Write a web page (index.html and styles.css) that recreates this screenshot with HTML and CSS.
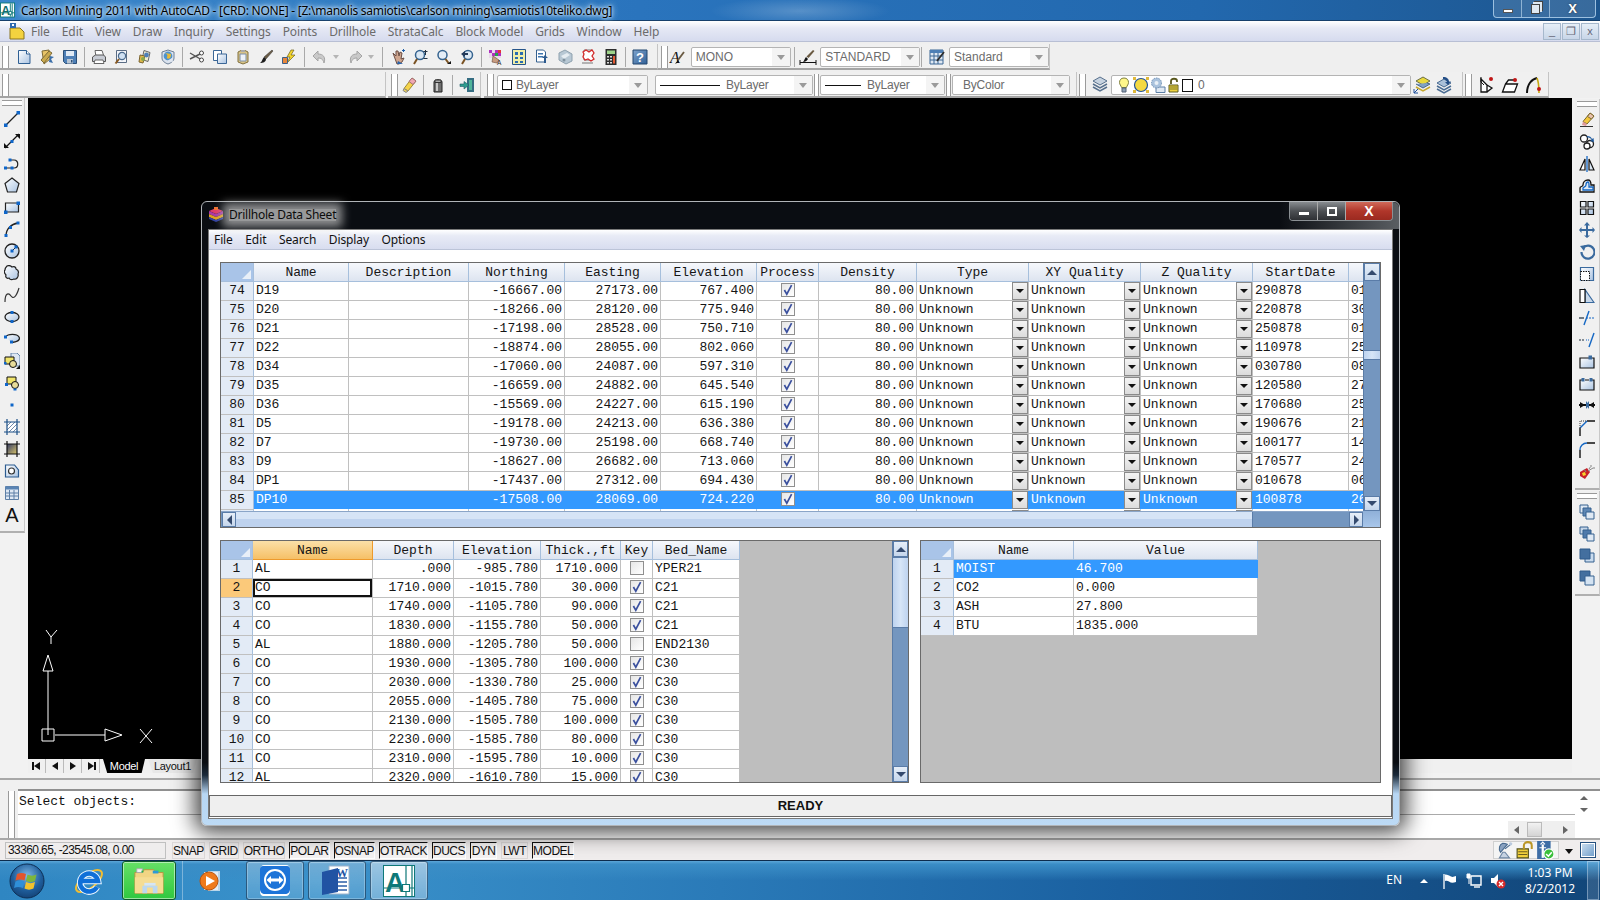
FILE: index.html
```html
<!DOCTYPE html>
<html lang="en">
<head>
<meta charset="utf-8">
<title>Carlson Mining 2011 with AutoCAD</title>
<link rel="stylesheet" href="styles.css">
</head>
<body>
<svg class="sprite" xmlns="http://www.w3.org/2000/svg">
<defs>
<linearGradient id="gb" x1="0" y1="0" x2="1" y2="1"><stop offset="0" stop-color="#fff"/><stop offset="1" stop-color="#a9c3e2"/></linearGradient>
<linearGradient id="gd" x1="0" y1="0" x2="1" y2="1"><stop offset="0" stop-color="#7fa3cc"/><stop offset="1" stop-color="#2f5f96"/></linearGradient>
<symbol id="new" viewBox="0 0 16 16"><path d="M2.5 1.5h8l3.5 3.5v9.5H2.5z" fill="url(#gb)" stroke="#2e5f93"/><path d="M10.5 1.5V5H14" fill="#fff" stroke="#2e5f93"/></symbol>
<symbol id="open" viewBox="0 0 16 16"><path d="M3 2l7-1 1 9-6 5z" fill="#e8c468" stroke="#7d6a36"/><path d="M5 14l-3-3 8-9 3 2z" fill="#c9a94e" stroke="#7d6a36"/><path d="M10 13l4 1-2-4 3-2-4-1" fill="#3a6ea8"/></symbol>
<symbol id="save" viewBox="0 0 16 16"><path d="M1.5 1.5h13v13h-11l-2-2z" fill="#4d7fb6" stroke="#2b4f78"/><path d="M4 2h8v5H4z" fill="#dfe9f4"/><path d="M5 10h6v4.5H5z" fill="#b9c6d4"/><path d="M9 11h1.5v2.5H9z" fill="#2b4f78"/></symbol>
<symbol id="print" viewBox="0 0 16 16"><path d="M4 1.5h7l2 6H5z" fill="#fff" stroke="#666"/><path d="M1.5 8l3-2h8l2 2v4.5h-13z" fill="#c8ccd4" stroke="#555"/><path d="M4 11h8l1 3.5H3z" fill="#fff" stroke="#666"/></symbol>
<symbol id="preview" viewBox="0 0 16 16"><path d="M2.5 1.5h10v12h-10z" fill="#f4f6fa" stroke="#5a6c84"/><circle cx="8" cy="7" r="3.6" fill="#cfe0f2" stroke="#4a6a8e" stroke-width="1.2"/><path d="M5 10l-3.5 4.5" stroke="#8a5a22" stroke-width="2"/></symbol>
<symbol id="publish" viewBox="0 0 16 16"><path d="M7 1.5l6 2-2 9-6-2z" fill="#f4efd0" stroke="#666"/><path d="M3 6l5 1-2 7-4-1z" fill="#e2b94b" stroke="#7a6430"/><circle cx="9.5" cy="6" r="2.4" fill="#4f80b8"/><circle cx="6" cy="10" r="2" fill="#8aa84b"/></symbol>
<symbol id="web" viewBox="0 0 16 16"><path d="M2 3l6-2 6 2v6c0 3-3 5-6 6-3-1-6-3-6-6z" fill="#dbe3ee" stroke="#6d7f96"/><circle cx="8" cy="7" r="4.4" fill="#4d93cf"/><path d="M5 4c2 1 3 2 2 4s2 2 3 1 1-3 1-4" fill="#e6b93a"/><path d="M7 12l5-3 1 4z" fill="#e0e6ef"/></symbol>
<symbol id="cut" viewBox="0 0 16 16"><path d="M1 4l12 7M1 10l12-6" stroke="#555" stroke-width="1.4"/><circle cx="12.5" cy="4" r="2" fill="#fff" stroke="#444"/><circle cx="12.5" cy="11" r="2" fill="#fff" stroke="#444"/></symbol>
<symbol id="copy" viewBox="0 0 16 16"><path d="M1.5 1.5h8v10h-8z" fill="#fff" stroke="#3b6797"/><path d="M5.5 5h9v9.5h-9z" fill="url(#gb)" stroke="#3b6797"/></symbol>
<symbol id="paste" viewBox="0 0 16 16"><path d="M3 3l3-1.5h4l3 1.5v10l-5 2-5-2z" fill="#d9c488" stroke="#80703f"/><path d="M5 5h6v7H5z" fill="#eef3f9" stroke="#7a8ea7"/><path d="M6 1h4v2H6z" fill="#aaa"/></symbol>
<symbol id="brush" viewBox="0 0 16 16"><path d="M14 1l1 1-7 8-2-2z" fill="#6b5c45" stroke="#333" stroke-width=".5"/><path d="M6 8l2 2c0 3-3 4-6 4 2-1 2-4 4-6z" fill="#1c1c1c"/></symbol>
<symbol id="flash" viewBox="0 0 16 16"><path d="M10 1l-4 7h3l-3 6 8-8h-4l3-5z" fill="#f5d62a" stroke="#6d6220" stroke-width=".7"/><path d="M1.5 8.5h5v6h-5z" fill="#e8863a" stroke="#3c5f88"/></symbol>
<symbol id="undo" viewBox="0 0 16 16"><path d="M6 2L1 7l5 5V9c3 0 5 1 6 5 2-6-1-9-6-9z" fill="#c9c9c9" stroke="#a5a5a5"/></symbol>
<symbol id="redo" viewBox="0 0 16 16"><path d="M10 2l5 5-5 5V9c-3 0-5 1-6 5-2-6 1-9 6-9z" fill="#c9c9c9" stroke="#a5a5a5"/></symbol>
<symbol id="pan" viewBox="0 0 16 16"><path d="M3 4l3 3 0-5 2 0 1 5 1-4 2 1-1 6 3-1-2 4-3 2H7z" fill="#cfa58e" stroke="#6c4e44"/><path d="M12 1.5h3M13.5 0v3" stroke="#1d5da8"/><path d="M8 12l5 3H7z" fill="#2a63a8"/></symbol>
<symbol id="zoomrt" viewBox="0 0 16 16"><circle cx="7" cy="6" r="4.5" fill="#dbe8f4" stroke="#35638f" stroke-width="1.5"/><path d="M4 10l-3 5" stroke="#7a5222" stroke-width="2"/><path d="M12.5 1v5M10.5 2.5h4M10.5 9.5h4" stroke="#234"/></symbol>
<symbol id="zoomwin" viewBox="0 0 16 16"><circle cx="6.5" cy="6" r="4.5" fill="#e4edf6" stroke="#35638f" stroke-width="1.5"/><path d="M9.5 10l3 4" stroke="#7a5222" stroke-width="2"/><path d="M11 15l4 0 0-3z" fill="#111"/></symbol>
<symbol id="zoomprev" viewBox="0 0 16 16"><circle cx="9" cy="6" r="4.5" fill="#dbe8f4" stroke="#35638f" stroke-width="1.5"/><path d="M6 10l-3 5" stroke="#7a5222" stroke-width="2"/><path d="M2 5l4-3v2h3v2H6v2z" fill="#223a5a"/></symbol>
<symbol id="prop" viewBox="0 0 16 16"><path d="M1 1h12v8H1z" fill="#e8d8ea"/><path d="M1 1h3v3H1zM7 1h3v3H7zM4 4h3v3H4zM10 4h3v3h-3z" fill="#b030c0"/><path d="M7 4h3v3H7z" fill="#25a348"/><path d="M10 1h3v3h-3z" fill="#e43535"/><path d="M5 7l6 4-2 3-5-1z" fill="#c89c80" stroke="#6a4a3a" stroke-width=".6"/><text x="9" y="16" font-size="6.5" font-family="Liberation Sans" fill="#222">A</text></symbol>
<symbol id="design" viewBox="0 0 16 16"><path d="M1.5 .5h13v15h-13z" fill="#f1efa8" stroke="#26558a"/><path d="M4 3h3v3H4zM9 3h3v3H9zM4 8h3v2H4zM9 8h3v2H9zM4 12h3v2H4zM9 12h3v2H9z" fill="#2a6cb0"/></symbol>
<symbol id="sheet" viewBox="0 0 16 16"><path d="M2.5 1h7l2 2v10h-9z" fill="#fff" stroke="#35618f"/><path d="M4 4h5v1.5H4zM4 7h5v1.5H4z" fill="#3d74ad"/><path d="M11 6l3 3-2 0v5h-2V9H8z" fill="#2c5a8e"/></symbol>
<symbol id="tool" viewBox="0 0 16 16"><path d="M2 4l6-3 7 4v7l-6 3-7-4z" fill="#b8c8d4" stroke="#8ea1ae"/><path d="M4 7l6-3 3 2-6 4z" fill="#e6edf2"/><circle cx="7" cy="11" r="1.5" fill="#7f919e"/></symbol>
<symbol id="markup" viewBox="0 0 16 16"><path d="M4 1h8v10H4z" fill="#fff" stroke="#7a7a7a"/><path d="M3 3l3-2 3 2 3-2 2 3-2 3 2 3-3 2-3-2-3 1-2-3 1-3z" fill="#fff" stroke="#d42a2a" stroke-width="1.3"/><path d="M2 14h11" stroke="#777"/></symbol>
<symbol id="calc" viewBox="0 0 16 16"><path d="M2.5 0h11v16h-11z" fill="#2d2d2d"/><path d="M4 1.5h8v3.5H4z" fill="#9ed38a"/><path d="M4 7h2v1.5H4zM7 7h2v1.5H7zM4 10h2v1.5H4zM7 10h2v1.5H7zM4 13h2v1.5H4zM7 13h2v1.5H7z" fill="#ddd"/><path d="M10 7h2v7.5h-2z" fill="#e45a33"/></symbol>
<symbol id="help" viewBox="0 0 16 16"><path d="M1 1h14v14H1z" fill="url(#gd)" stroke="#23476f"/><text x="8" y="13" text-anchor="middle" font-size="13" font-weight="700" font-family="Liberation Sans" fill="#fff">?</text></symbol>
<symbol id="tstyle" viewBox="0 0 18 18"><text x="1" y="15" font-size="16" font-family="Liberation Serif" font-style="italic" fill="#111">A</text><path d="M15 4l-6 8" stroke="#6a5a42" stroke-width="1.8"/><path d="M9 12l-3 4 4-2z" fill="#111"/></symbol>
<symbol id="dstyle" viewBox="0 0 18 18"><path d="M1 12v5M17 12v5M1 14.5h16" stroke="#111"/><path d="M14 2l1.5 1-6 7-2-1.5z" fill="#6a5a42"/><path d="M7 9l2 2c-1 2-3 3-5 3 1-1 2-4 3-5z" fill="#111"/></symbol>
<symbol id="tblstyle" viewBox="0 0 16 16"><path d="M1 1h13v14H1z" fill="#dfe8f3" stroke="#3a6795"/><path d="M1 1h13v3H1z" fill="#4d7fb6"/><path d="M1 7h13M1 11h13M5 4v11M9 4v11" stroke="#3a6795"/><path d="M15 3l-7 9" stroke="#2c2c2c" stroke-width="1.8"/></symbol>
<symbol id="eraser" viewBox="0 0 16 16"><path d="M11 1l4 3-8 10-4-2.5z" fill="#f5d34a" stroke="#9d8a33"/><path d="M11 1l4 3-3 3.5-4-3z" fill="#f0a7b2" stroke="#a37078"/><path d="M3 11.5l4 2.5-2 1.5-3-2z" fill="#e8ce5a" stroke="#888"/></symbol>
<symbol id="bottle" viewBox="0 0 16 16"><path d="M4 5c0-3 8-3 8 0v10H4z" fill="#6e6e6e" stroke="#222"/><path d="M5 3h6v2.5H5z" fill="#aaa" stroke="#333"/><path d="M6 6h2v8H6z" fill="#c7c7c7"/></symbol>
<symbol id="exit" viewBox="0 0 16 16"><path d="M8 1h7v14H8z" fill="#356d82"/><path d="M10 3h3v10h-3z" fill="#4fb49a"/><path d="M1 7h4V4.5l5 3.5-5 4V9.5H1z" fill="#2d9c8e" stroke="#1d5d66" stroke-width=".6"/></symbol>
<symbol id="layers" viewBox="0 0 18 18"><path d="M9 1l7 4-7 4-7-4z" fill="#c7d3e0" stroke="#566f8c"/><path d="M2 8l7 4 7-4M2 11l7 4 7-4" fill="none" stroke="#566f8c" stroke-width="1.5"/></symbol>
<symbol id="bulb" viewBox="0 0 16 16"><path d="M8 1c3 0 4.5 2 4.5 4.5 0 2-1.5 3-2 5h-5c-.5-2-2-3-2-5C3.5 3 5 1 8 1z" fill="#fff78a" stroke="#7f8040"/><path d="M6 11h4v4H6z" fill="#8ea0b4" stroke="#546376"/></symbol>
<symbol id="sun" viewBox="0 0 16 16"><circle cx="8" cy="8" r="6.5" fill="#f4d942" stroke="#21529a" stroke-width="1.2"/><path d="M0 0h3v3H0zM13 0h3v3h-3zM0 13h3v3H0zM13 13h3v3h-3z" fill="#e0b93b"/></symbol>
<symbol id="snow" viewBox="0 0 16 16"><path d="M6 10h9v5.5H6z" fill="#dfe8f2" stroke="#5c7fa6"/><circle cx="6.5" cy="6" r="5" fill="#a9c2dd" stroke="#6d8fb4" stroke-dasharray="1.5 1"/><circle cx="6.5" cy="6" r="2" fill="#e8eff6"/></symbol>
<symbol id="lock" viewBox="0 0 16 16"><path d="M2 8h9v7H2z" fill="#eed23d" stroke="#5a5a20"/><path d="M4 7V4c0-3 6-3 6 0v1" fill="none" stroke="#57561c" stroke-width="1.8"/><path d="M3 10h7M3 12h7" stroke="#7a7a2d"/></symbol>
<symbol id="layprev" viewBox="0 0 18 18"><path d="M10 1l7 4-7 4-7-4z" fill="#e9d93e" stroke="#6d6f46"/><path d="M3 8l7 4 7-4-3-1" fill="#7fa0c4" stroke="#49688c"/><path d="M3 11l7 4 7-4" fill="none" stroke="#c5a72d" stroke-width="1.5"/><path d="M1 17l4-4M1 13v4h4" stroke="#1d4e9c" fill="none"/></symbol>
<symbol id="laystate" viewBox="0 0 18 18"><path d="M9 3l7 4-7 4-7-4z" fill="#aac0d8" stroke="#496b92"/><path d="M2 10l7 4 7-4M2 13l7 4 7-4" fill="none" stroke="#496b92" stroke-width="1.5"/><path d="M8 1c4 0 6 2 6 5l2-1-3 4-3-3 2 0c0-1-2-3-4-3z" fill="#234e86"/></symbol>
<symbol id="ext1" viewBox="0 0 18 18"><path d="M3 3l6 6v7H3zM9 9l5 3-5 4" fill="#fff" stroke="#111" stroke-width="1.3"/><path d="M3 1v5M3 6l3 3" stroke="#111"/><circle cx="13" cy="3" r="2" fill="#c01616"/></symbol>
<symbol id="ext2" viewBox="0 0 18 18"><path d="M1.5 16l3-8h12l-3 8zM4.5 8l3-4h7" fill="#fff" stroke="#111" stroke-width="1.3"/><circle cx="14" cy="4" r="2" fill="#c01616"/></symbol>
<symbol id="ext3" viewBox="0 0 18 18"><path d="M3 17c0-9 5-14 10-15" fill="none" stroke="#111" stroke-width="2"/><path d="M13 2c2 5 2 9 2 15" fill="none" stroke="#c8a810" stroke-width="1.6"/><circle cx="15" cy="13" r="2" fill="#c01616"/></symbol>

<symbol id="d-line" viewBox="0 0 16 16"><path d="M2 14L14 2" stroke="#222" stroke-width="1.2"/><path d="M0 12.5h3.5V16H0zM12.5 0H16v3.5h-3.5z" fill="#0f66c9"/></symbol>
<symbol id="d-xline" viewBox="0 0 16 16"><path d="M1 15L15 1" stroke="#111" stroke-width="1.3"/><path d="M11 1h5v5zM5 15H0v-5z" fill="#111"/><path d="M6.5 7h3v3h-3z" fill="#0f66c9"/></symbol>
<symbol id="d-pline" viewBox="0 0 16 16"><path d="M2 13h8c5 0 5-8 0-8H6" fill="none" stroke="#222" stroke-width="1.2"/><path d="M0 11.5h3v3H0zM6.5 11.5h3v3h-3zM4.5 3.5h3v3h-3z" fill="#0f66c9"/></symbol>
<symbol id="d-poly" viewBox="0 0 16 16"><path d="M8 1l7 5.5-2.5 8.5h-9L1 6.5z" fill="url(#gb)" stroke="#222" stroke-width="1.2"/></symbol>
<symbol id="d-rect" viewBox="0 0 16 16"><path d="M1.5 4h13v9h-13z" fill="url(#gb)" stroke="#222" stroke-width="1.2"/><path d="M0 11.5h3.5V15H0zM12.5 2.5H16V6h-3.5z" fill="#0f66c9"/></symbol>
<symbol id="d-arc" viewBox="0 0 16 16"><path d="M2 15C2 8 7 3 14 2" fill="none" stroke="#222" stroke-width="1.3"/><path d="M.5 13h3v3h-3zM5 5h3v3H5zM12.5 .5h3v3h-3z" fill="#0f66c9"/></symbol>
<symbol id="d-circ" viewBox="0 0 16 16"><circle cx="8" cy="8" r="7" fill="url(#gb)" stroke="#222" stroke-width="1.3"/><path d="M8 8l4-4" stroke="#222"/><path d="M6.5 6.5h3v3h-3zM10.5 2.5h3v3h-3z" fill="#0f66c9"/></symbol>
<symbol id="d-cloud" viewBox="0 0 16 16"><path d="M3 1c2-1 4 0 5 1 2-1 4 0 4 2 2 1 3 3 2 5 1 3-2 6-4 5-2 1-4 1-5-1-2 1-4-1-3-3-2-2-2-4-1-5 0-2 1-3 2-4z" fill="url(#gb)" stroke="#222" stroke-width="1.2"/></symbol>
<symbol id="d-spline" viewBox="0 0 16 16"><path d="M1 15C1 5 5 6 7 9s5 2 8-8" fill="none" stroke="#333" stroke-width="1.2"/></symbol>
<symbol id="d-ell" viewBox="0 0 16 16"><ellipse cx="8" cy="8" rx="7" ry="4.5" fill="url(#gb)" stroke="#222" stroke-width="1.3"/><path d="M6.5 2h3v3h-3zM6.5 11h3v3h-3z" fill="#0f66c9"/></symbol>
<symbol id="d-ellarc" viewBox="0 0 16 16"><path d="M1.5 6C4 2.5 13 2.5 15 6s-4 6-8 5" fill="url(#gb)" stroke="#222" stroke-width="1.3"/><path d="M0 4.5h3v3H0zM6 9.5h3v3H6z" fill="#0f66c9"/></symbol>
<symbol id="d-insert" viewBox="0 0 16 16"><path d="M7 0h6l3 3v10H7z" fill="#dce6f1" stroke="#6283a7"/><path d="M1 4h9v7H1z" fill="#f0e46a" stroke="#111"/><circle cx="9" cy="11" r="3.5" fill="#e8dc9a" stroke="#111"/><path d="M0 9h2.5v2.5H0z" fill="#0f66c9"/><path d="M12 16l4-4v4z" fill="#111"/></symbol>
<symbol id="d-block" viewBox="0 0 16 16"><path d="M3 2h9v7H3z" fill="#f0e46a" stroke="#111"/><circle cx="11" cy="10" r="3.5" fill="#e8dc9a" stroke="#111"/><path d="M1 8h3v3H1zM9.5 13.5h3v2h-3z" fill="#0f66c9"/></symbol>
<symbol id="d-point" viewBox="0 0 16 16"><path d="M6.5 6.5h3v3h-3z" fill="#0f66c9"/></symbol>
<symbol id="d-hatch" viewBox="0 0 16 16"><path d="M3 3h10v10H3z" fill="#fff"/><path d="M3 7l4-4M3 11l8-8M5 13l8-8M9 13l4-4" stroke="#7189a8"/><path d="M0 3h16M0 13h16M3 0v16M13 0v16" stroke="#1b4f86" stroke-width="1.2"/></symbol>
<symbol id="d-grad" viewBox="0 0 16 16"><linearGradient id="gr" x1="0" y1="0" x2="1" y2="1"><stop offset="0" stop-color="#343c66"/><stop offset="1" stop-color="#d8c46a"/></linearGradient><path d="M3 3h10v10H3z" fill="url(#gr)"/><path d="M0 3h16M0 13h16M3 0v16M13 0v16" stroke="#111" stroke-width="1.2"/></symbol>
<symbol id="d-region" viewBox="0 0 16 16"><path d="M1.5 2h9l4 5v7h-13z" fill="url(#gb)" stroke="#2b5b90" stroke-width="1.2"/><circle cx="7.5" cy="8" r="3" fill="#fff" stroke="#333" stroke-width="1.2"/></symbol>
<symbol id="d-table" viewBox="0 0 16 16"><path d="M1.5 1.5h13v13h-13z" fill="#dee8f4" stroke="#5d7fa6"/><path d="M1.5 1.5h13v3h-13z" fill="#5a84b4"/><path d="M2 8h12M2 11h12M5.5 5v9M10 5v9" stroke="#5d7fa6"/></symbol>

<symbol id="m-erase" viewBox="0 0 16 16"><path d="M11 1l4 3-7 8-4-2.5z" fill="#f3c73d" stroke="#7d6a2c"/><path d="M11 1l4 3-2.5 3-4-2.5z" fill="#e9c2ae" stroke="#7d6a2c"/><path d="M1 14.5h13" stroke="#333"/><path d="M4 9.5l4 2.5-1 2-4-1z" fill="#d99"/></symbol>
<symbol id="m-copy" viewBox="0 0 16 16"><circle cx="5" cy="4.5" r="3.5" fill="#fff" stroke="#222" stroke-width="1.3"/><circle cx="11" cy="10" r="3.5" fill="#fff" stroke="#222" stroke-width="1.3"/><circle cx="8" cy="12" r="3" fill="#fff" stroke="#222" stroke-width="1.3"/><path d="M8 2c3 0 4 1 5 3l1.5-1L15 8l-4-1 1.5-1C12 4 10 3.5 8 3.5z" fill="#1f5a9e"/></symbol>
<symbol id="m-mirror" viewBox="0 0 16 16"><path d="M1 14L6 3v11z" fill="#fff" stroke="#111" stroke-width="1.2"/><path d="M15 14L10 3v11z" fill="#dbe7f3" stroke="#111" stroke-width="1.2"/><path d="M8 0v16" stroke="#1467c4" stroke-width="1.3"/></symbol>
<symbol id="m-offset" viewBox="0 0 16 16"><path d="M1 14V10c0-2 3-1 3-3 0-3 2-5 5-5s3 3 3 5h3v7z" fill="none" stroke="#111" stroke-width="1.3"/><path d="M4 12v-2c0-1 3-1 3-3s1-3 2-3 1 2 1 3v2h4v3z" fill="#dbe7f3" stroke="#1467c4" stroke-width="1.3"/></symbol>
<symbol id="m-array" viewBox="0 0 16 16"><path d="M1.5 1.5H7V7H1.5zM9 1.5h5.5V7H9zM1.5 9H7v5.5H1.5zM9 9h5.5v5.5H9z" fill="url(#gb)" stroke="#111" stroke-width="1.2"/></symbol>
<symbol id="m-move" viewBox="0 0 16 16"><path d="M8 0l3 3.5H9V7h4.5V5L16 8l-2.5 3V9H9v4.5h2L8 16l-3-2.5h2V9H2.5v2L0 8l2.5-3v2H7V3.5H5z" fill="#3a6a9e"/></symbol>
<symbol id="m-rotate" viewBox="0 0 16 16"><path d="M4 4a6.5 6.5 0 1 1-1.5 4" fill="none" stroke="#3a6a9e" stroke-width="2.2"/><path d="M1 2l6-1-2 6z" fill="#3a6a9e"/></symbol>
<symbol id="m-scale" viewBox="0 0 16 16"><path d="M1.5 1.5h13v13h-13z" fill="url(#gb)" stroke="#3a6a9e" stroke-width="1.2"/><path d="M1.5 5.5h9v9h-9z" fill="#fff" stroke="#111" stroke-dasharray="1.5 1"/></symbol>
<symbol id="m-stretch" viewBox="0 0 16 16"><path d="M6 1.5L15 14.5H6z" fill="#c9d9ea" stroke="#3a6a9e" stroke-width="1.2"/><path d="M1 1.5h5v13H1z" fill="#fff" stroke="#111" stroke-width="1.2"/></symbol>
<symbol id="m-trim" viewBox="0 0 16 16"><path d="M0 8h5" stroke="#1a2a3a" stroke-width="1.2"/><path d="M7 8h9" stroke="#1467c4" stroke-dasharray="2 1"/><path d="M5 15l5-14" stroke="#1467c4" stroke-width="1.4"/></symbol>
<symbol id="m-extend" viewBox="0 0 16 16"><path d="M0 8h6" stroke="#1a2a3a" stroke-dasharray="2 1"/><path d="M7 8h3" stroke="#1467c4" stroke-dasharray="1 1"/><path d="M10 15l5-14" stroke="#1467c4" stroke-width="1.4"/></symbol>
<symbol id="m-brk1" viewBox="0 0 16 16"><path d="M1 4h14v10H1z" fill="url(#gb)" stroke="#111" stroke-width="1.2"/><path d="M9.5 1.5H13V5.5H9.5z" fill="#3a6a9e"/></symbol>
<symbol id="m-brk2" viewBox="0 0 16 16"><path d="M3 4H1v10h14V4h-2M6 4h4" fill="url(#gb)" stroke="#111" stroke-width="1.2"/><path d="M2.5 2h3v3.5h-3zM10.5 2h3v3.5h-3z" fill="#3a6a9e"/></symbol>
<symbol id="m-join" viewBox="0 0 16 16"><path d="M0 7h16" stroke="#111" stroke-width="2"/><path d="M1 4v6l5-3zM15 4v6l-5-3z" fill="#111"/><path d="M7 3l1.5 2L10 3v8L8.5 9 7 11z" fill="#3a6a9e"/></symbol>
<symbol id="m-chamfer" viewBox="0 0 16 16"><path d="M1 16V8M8 1h8" stroke="#111" stroke-width="1.4"/><path d="M1 8l7-7" stroke="#1467c4" stroke-width="1.4"/><path d="M1 8V1h7" fill="none" stroke="#333" stroke-dasharray="1 1"/></symbol>
<symbol id="m-fillet" viewBox="0 0 16 16"><path d="M1 16V8M8 1h8" stroke="#111" stroke-width="1.4"/><path d="M1 8c0-4 3-7 7-7" fill="none" stroke="#1467c4" stroke-width="1.4"/></symbol>
<symbol id="m-expl" viewBox="0 0 16 16"><path d="M1 8l7-4 3 4-5 7-5-3z" fill="#c8202a"/><path d="M3 9l3-1 1 3-3 1z" fill="#f5d42c"/><path d="M5 5l2 3M10 5l2-3M9 7l5-3" stroke="#888"/><path d="M11 1h2v2h-2zM14 3h2v2h-2z" fill="#b9b9b9"/></symbol>
<symbol id="o-1" viewBox="0 0 16 16"><path d="M1 1h8v8H1z" fill="#dfe9f4" stroke="#35618f"/><path d="M4 4h8v8H4z" fill="#5e87b4" stroke="#35618f"/><path d="M7 8h8v7H7z" fill="#dfe9f4" stroke="#35618f"/></symbol>
<symbol id="o-2" viewBox="0 0 16 16"><path d="M1 1h8v7H1z" fill="#c6d7e9" stroke="#35618f"/><path d="M4 4h8v8H4z" fill="#4f7aab" stroke="#35618f"/><path d="M8 8h7v7H8z" fill="#dfe9f4" stroke="#35618f"/></symbol>
<symbol id="o-3" viewBox="0 0 16 16"><path d="M6 5h9v9H6z" fill="#c9dbee" stroke="#35618f"/><path d="M1 1h10v10H1z" fill="#436f9f" stroke="#2e5a8a"/></symbol>
<symbol id="o-4" viewBox="0 0 16 16"><path d="M1 1h10v10H1z" fill="#436f9f" stroke="#2e5a8a"/><path d="M6 6h9v9H6z" fill="#d4e3f2" stroke="#35618f"/></symbol>

<symbol id="app" viewBox="0 0 16 16"><path d="M0 0h16v16H0z" fill="#0f7a7a"/><path d="M1 1h14v14H1z" fill="#fff"/><text x="6" y="13" font-size="13" font-weight="700" font-family="Liberation Sans" fill="#0f6b6b" text-anchor="middle">A</text><path d="M11 1v14M1 11h14M13 1v14" stroke="#0f7a7a"/><path d="M9.5 9.5h3v3h-3z" fill="#fff" stroke="#0f7a7a"/></symbol>
<symbol id="docmenu" viewBox="0 0 18 18"><path d="M2 6h10l4 4v7H2z" fill="#f3d23f" stroke="#8a7420"/><path d="M2 1h6v5H2z" fill="#2f6bb0"/><path d="M4 2h2v2H4z" fill="#fff"/></symbol>
<symbol id="dlgicon" viewBox="0 0 16 16"><path d="M8 1l7 3-7 3-7-3z" fill="#e03a6a"/><path d="M1 4v3l7 3 7-3V4L8 7z" fill="#a93aa8"/><path d="M1 7v3l7 3 7-3V7L8 10z" fill="#e0a020"/><path d="M1 10v2l7 3 7-3v-2l-7 3z" fill="#3040a0"/><path d="M6 0h4v3H6z" fill="#f07030"/></symbol>
<symbol id="chk" viewBox="0 0 10 10"><path d="M2 5l2 3.5L8 1" fill="none" stroke="#3b509e" stroke-width="1.4"/></symbol>

<symbol id="t-orb" viewBox="0 0 36 36"><radialGradient id="orb" cx=".5" cy=".35" r=".7"><stop offset="0" stop-color="#7fb8e6"/><stop offset=".6" stop-color="#1f5e9c"/><stop offset="1" stop-color="#123e70"/></radialGradient><circle cx="18" cy="18" r="17" fill="url(#orb)" stroke="#0e2f55"/><path d="M8 11c3-1.5 6-1.5 9 0l-1.5 6.5c-3-1.5-6-1.5-9 0z" fill="#e2552c"/><path d="M18.5 11.5c3 1.5 6 1.5 9 0L26 18c-3 1.5-6 1.5-9 0z" fill="#7db63c"/><path d="M6.5 18.5c3-1.5 6-1.5 9 0L14 25c-3-1.5-6-1.5-9 0z" fill="#2f8fd8"/><path d="M17 19c3 1.5 6 1.5 9 0l-1.5 6.5c-3 1.5-6 1.5-9 0z" fill="#f3c22c"/></symbol>
<symbol id="t-ie" viewBox="0 0 32 32"><ellipse cx="16" cy="16" rx="15.5" ry="7" transform="rotate(-38 16 16)" fill="none" stroke="#f2bd30" stroke-width="2"/><path d="M24 22A9 9 0 1 1 25 16H8" fill="none" stroke="#eaf6ff" stroke-width="6.5"/><path d="M24 22A9 9 0 1 1 25 16H8" fill="none" stroke="#0f6fd8" stroke-width="4.5"/></symbol>
<symbol id="t-folder" viewBox="0 0 34 34"><path d="M2 8h8l2-3h10l2 3h8v22H2z" fill="#f1d584" stroke="#b7943f"/><path d="M4 4h6v4H4z" fill="#f4f4f4" stroke="#aaa"/><path d="M9 6h2v2H9z" fill="#24b14a"/><path d="M21 6h6v3h-6z" fill="#2d9ad6"/><path d="M2 13h30v17H2z" fill="#f5dd93"/><path d="M12 19h12v3H12z" fill="#d5e6f5"/><path d="M10 22h16v8h-5v-6h-6v6h-5z" fill="#bcd8ef"/></symbol>
<symbol id="t-wmp" viewBox="0 0 32 32"><path d="M13 6h12v20H13z" fill="#dbe8f2" opacity=".8"/><path d="M9 7h14v18H9z" fill="#e9f0f6" opacity=".9"/><circle cx="14" cy="16" r="9" fill="#ee7a1c" stroke="#b9530d"/><path d="M11 11l9 5-9 5z" fill="#fff"/></symbol>
<symbol id="t-tv" viewBox="0 0 32 32"><path d="M5 0h22c3 0 4 2 4 4v22c0 3-2 5-4 5H5c-3 0-4-2-4-5V4c0-2 2-4 4-4z" fill="#fff"/><path d="M4 1h24c2 0 3 1 3 3v20c0 3-2 5-5 5H6c-3 0-5-2-5-5V4c0-2 1-3 3-3z" fill="#1d74d8"/><circle cx="16" cy="15" r="11" fill="#fff"/><circle cx="16" cy="15" r="9" fill="#1d74d8"/><path d="M7.5 15l4.5-4v2.5h8V11l4.500 4-4.500 4v-2.500h-8V19z" fill="#fff"/></symbol>
<symbol id="t-word" viewBox="0 0 32 32"><path d="M8 1h20v28H8z" fill="#fff" stroke="#9cb2cb"/><path d="M14 13h12M14 17h12M14 21h12M14 25h12" stroke="#2d5fa8" stroke-width="1.4"/><path d="M1 7l16-4v24L1 30z" fill="#2153a3"/><text x="21" y="12" font-size="12" font-weight="700" font-family="Liberation Serif" fill="#2153a3" text-anchor="middle">W</text></symbol>
<symbol id="t-acad" viewBox="0 0 32 32"><path d="M0 0h32v32H0z" fill="#fff"/><text x="12" y="27" font-size="28" font-weight="700" font-family="Liberation Sans" fill="#0e7878" text-anchor="middle">A</text><path d="M23 0v32M0 23h32M29 0v32" stroke="#0e7878" stroke-width="1.2"/><path d="M19.5 19.5h7v7h-7z" fill="#fff" stroke="#0e7878" stroke-width="1.2"/><path d="M0 0h32v32H0z" fill="none" stroke="#0e7878" stroke-width="2"/></symbol>
<symbol id="s-sat" viewBox="0 0 16 16"><path d="M6 2c-3 1-4 5-2 8l6-7C8 2 7 2 6 2z" fill="#8aa2c0" stroke="#4a6b90"/><path d="M8 7l5-4" stroke="#4a6b90"/><circle cx="13" cy="2.5" r="1.5" fill="#b9c9de"/><path d="M6 10l-3 5h9l-4-5z" fill="#c5d2e2" stroke="#6e86a4"/></symbol>
<symbol id="s-lock" viewBox="0 0 16 16"><path d="M1 7h10v8H1z" fill="#f0cf3b" stroke="#53501a"/><path d="M7 7V4c0-4 7-4 7 0v3" fill="none" stroke="#bb9626" stroke-width="1.8"/><path d="M2 9.5h8M2 12h8" stroke="#6b5e1f"/></symbol>
<symbol id="s-tool" viewBox="0 0 16 16"><path d="M1 0h12v16H1z" fill="#3d6da5"/><path d="M5 3h2v12H5z" fill="#fff"/><path d="M3 6h6M4 3l2-2 2 2" stroke="#fff" fill="none"/><circle cx="11.5" cy="11.5" r="4.5" fill="#3abf3a" stroke="#fff"/><path d="M9 11.5l2 2 3-3.500" stroke="#fff" fill="none" stroke-width="1.4"/></symbol>
<symbol id="y-flag" viewBox="0 0 16 16"><path d="M2 1v15" stroke="#fff" stroke-width="1.3"/><path d="M3 1.5c3 0 4 1 6 2s3 0 5-.5v6c-3 1-5 1-7-.5-1-.5-2-1-4-.5z" fill="#fff"/></symbol>
<symbol id="y-net" viewBox="0 0 16 16"><path d="M5 3h10v9H5z" fill="none" stroke="#fff" stroke-width="1.4"/><path d="M1 1h3v4H1zM3 5v6" stroke="#fff" fill="#fff"/><path d="M8 14h6" stroke="#fff" stroke-width="1.4"/></symbol>
<symbol id="y-spk" viewBox="0 0 16 16"><path d="M1 5h3l4-4v13L4 10H1z" fill="#fff"/><circle cx="11" cy="11" r="4.5" fill="#d52a2a"/><path d="M9 9l4 4M13 9l-4 4" stroke="#fff" stroke-width="1.4"/></symbol>
</defs>
</svg>

<div class="app">
  <header class="titlebar">
    <svg class="i app-ico"><use href="#app"/></svg>
    <span class="title-text">Carlson Mining 2011 with AutoCAD - [CRD: NONE] - [Z:\manolis samiotis\carlson mining\samiotis10teliko.dwg]</span>
    <div class="wbtns">
      <span class="wb wb-min"><i></i></span><span class="wb wb-max"><i></i></span><span class="wb wb-close">X</span>
    </div>
  </header>

  <nav class="menubar">
    <svg class="menu-ico"><use href="#docmenu"/></svg>
    <span>File</span><span>Edit</span><span>View</span><span>Draw</span><span>Inquiry</span><span>Settings</span><span>Points</span><span>Drillhole</span><span>StrataCalc</span><span>Block Model</span><span>Grids</span><span>Window</span><span>Help</span>
    <div class="childbtns"><span class="cb">_</span><span class="cb">&#10064;</span><span class="cb">x</span></div>
  </nav>

  <div class="tbrow">
    <div class="tb tb1">
      <i class="handle"></i>
      <b><svg class="i"><use href="#new"/></svg></b><b><svg class="i"><use href="#open"/></svg></b><b><svg class="i"><use href="#save"/></svg></b><i class="sep"></i>
      <b><svg class="i"><use href="#print"/></svg></b><b><svg class="i"><use href="#preview"/></svg></b><b><svg class="i"><use href="#publish"/></svg></b><b><svg class="i"><use href="#web"/></svg></b><i class="sep"></i>
      <b><svg class="i"><use href="#cut"/></svg></b><b><svg class="i"><use href="#copy"/></svg></b><b><svg class="i"><use href="#paste"/></svg></b><b><svg class="i"><use href="#brush"/></svg></b><b><svg class="i"><use href="#flash"/></svg></b><i class="sep sep-w"></i>
      <b><svg class="i"><use href="#undo"/></svg></b><i class="drop"></i><b><svg class="i"><use href="#redo"/></svg></b><i class="drop"></i><i class="sep sep-w"></i>
      <b><svg class="i"><use href="#pan"/></svg></b><b><svg class="i"><use href="#zoomrt"/></svg></b><b><svg class="i"><use href="#zoomwin"/></svg></b><b><svg class="i"><use href="#zoomprev"/></svg></b><i class="sep"></i>
      <b><svg class="i"><use href="#prop"/></svg></b><b><svg class="i"><use href="#design"/></svg></b><b><svg class="i"><use href="#sheet"/></svg></b><b><svg class="i"><use href="#tool"/></svg></b><b><svg class="i"><use href="#markup"/></svg></b><b><svg class="i"><use href="#calc"/></svg></b><i class="sep"></i>
      <b><svg class="i"><use href="#help"/></svg></b>
    </div>
    <div class="tb tb2">
      <i class="handle"></i>
      <b><svg class="i i18"><use href="#tstyle"/></svg></b>
      <span class="combo c-mono">MONO<i class="arrow"></i></span>
      <i class="sep sep-a"></i>
      <b><svg class="i i18"><use href="#dstyle"/></svg></b>
      <span class="combo c-mono">STANDARD<i class="arrow"></i></span>
      <i class="sep sep-b"></i>
      <b><svg class="i"><use href="#tblstyle"/></svg></b>
      <span class="combo c-mono">Standard<i class="arrow"></i></span>
    </div>
  </div>

  <div class="tbrow">
    <div class="tb tb-empty"><i class="handle"></i></div>
    <div class="tb tb3">
      <i class="handle"></i>
      <b><svg class="i"><use href="#eraser"/></svg></b><i class="sep"></i>
      <b><svg class="i"><use href="#bottle"/></svg></b><i class="sep"></i>
      <b><svg class="i"><use href="#exit"/></svg></b>
    </div>
    <div class="tb tb4">
      <i class="handle"></i>
      <span class="combo c-color"><i class="swatch"></i>ByLayer<i class="arrow"></i></span>
      <span class="combo c-line"><i class="ln"></i>ByLayer<i class="arrow"></i></span>
      <i class="handle handle-s"></i>
      <span class="combo c-line2"><i class="ln"></i>ByLayer<i class="arrow"></i></span>
      <i class="handle handle-s"></i>
      <span class="combo c-plot">ByColor<i class="arrow"></i></span>
    </div>
    <div class="tb tb5">
      <i class="handle"></i>
      <b><svg class="i i18"><use href="#layers"/></svg></b>
      <span class="combo c-layer">
        <svg class="i i14"><use href="#bulb"/></svg><svg class="i i14"><use href="#sun"/></svg><svg class="i i14"><use href="#snow"/></svg><svg class="i i14"><use href="#lock"/></svg><i class="swatch sw-lg"></i>0<i class="arrow"></i>
      </span>
      <b><svg class="i i18"><use href="#layprev"/></svg></b><b><svg class="i i18"><use href="#laystate"/></svg></b>
    </div>
    <div class="tb tb6">
      <i class="handle"></i>
      <b><svg class="i i18"><use href="#ext1"/></svg></b><b><svg class="i i18"><use href="#ext2"/></svg></b><b><svg class="i i18"><use href="#ext3"/></svg></b>
    </div>
  </div>

  <main class="workspace">
    <aside class="vbar vbar-l">
      <div class="vtb">
        <i class="vhandle"></i>
        <b><svg class="i"><use href="#d-line"/></svg></b><b><svg class="i"><use href="#d-xline"/></svg></b><b><svg class="i"><use href="#d-pline"/></svg></b><b><svg class="i"><use href="#d-poly"/></svg></b><b><svg class="i"><use href="#d-rect"/></svg></b><b><svg class="i"><use href="#d-arc"/></svg></b><b><svg class="i"><use href="#d-circ"/></svg></b><b><svg class="i"><use href="#d-cloud"/></svg></b><b><svg class="i"><use href="#d-spline"/></svg></b><b><svg class="i"><use href="#d-ell"/></svg></b><b><svg class="i"><use href="#d-ellarc"/></svg></b><b><svg class="i"><use href="#d-insert"/></svg></b><b><svg class="i"><use href="#d-block"/></svg></b><b><svg class="i"><use href="#d-point"/></svg></b><b><svg class="i"><use href="#d-hatch"/></svg></b><b><svg class="i"><use href="#d-grad"/></svg></b><b><svg class="i"><use href="#d-region"/></svg></b><b><svg class="i"><use href="#d-table"/></svg></b><b class="big-a">A</b>
      </div>
    </aside>
    <section class="canvas-col">
      <div class="canvas">
        <svg class="ucs" viewBox="0 0 130 130" width="130" height="130">
          <g fill="none" stroke="#fff" stroke-width="1">
            <path d="M20 114V50"/><path d="M15 50l5-16 5 16z"/><path d="M27 114h50"/><path d="M77 108l17 6-17 6z"/><path d="M14 108h12v12H14z"/>
            <path d="M18 9l5 7 6-7M23 16v7M112 108l12 14M124 108l-12 14"/>
          </g>
        </svg>
      </div>
      <div class="tabs">
        <span class="nav"><i class="nf"></i></span><span class="nav"><i class="np"></i></span><span class="nav"><i class="nn"></i></span><span class="nav"><i class="nl"></i></span>
        <span class="tab tab-on">Model</span><span class="tab">Layout1</span>
      </div>
    </section>
    <aside class="vbar vbar-r">
      <div class="vtb">
        <i class="vhandle"></i>
        <b><svg class="i"><use href="#m-erase"/></svg></b><b><svg class="i"><use href="#m-copy"/></svg></b><b><svg class="i"><use href="#m-mirror"/></svg></b><b><svg class="i"><use href="#m-offset"/></svg></b><b><svg class="i"><use href="#m-array"/></svg></b><b><svg class="i"><use href="#m-move"/></svg></b><b><svg class="i"><use href="#m-rotate"/></svg></b><b><svg class="i"><use href="#m-scale"/></svg></b><b><svg class="i"><use href="#m-stretch"/></svg></b><b><svg class="i"><use href="#m-trim"/></svg></b><b><svg class="i"><use href="#m-extend"/></svg></b><b><svg class="i"><use href="#m-brk1"/></svg></b><b><svg class="i"><use href="#m-brk2"/></svg></b><b><svg class="i"><use href="#m-join"/></svg></b><b><svg class="i"><use href="#m-chamfer"/></svg></b><b><svg class="i"><use href="#m-fillet"/></svg></b><b><svg class="i"><use href="#m-expl"/></svg></b>
      </div>
      <div class="vtb">
        <i class="vhandle"></i>
        <b><svg class="i"><use href="#o-1"/></svg></b><b><svg class="i"><use href="#o-2"/></svg></b><b><svg class="i"><use href="#o-3"/></svg></b><b><svg class="i"><use href="#o-4"/></svg></b>
      </div>
    </aside>
  </main>

  <section class="command">
    <i class="chandle"></i>
    <div class="cbox">
      <div class="cline">Select objects:</div>
      <div class="cinput"></div>
    </div>
    <div class="cscroll">
      <span class="ca ca-up"></span><span class="ca ca-dn"></span>
      <div class="chs"><i class="al"></i><i class="thumb"></i><i class="ar"></i></div>
    </div>
  </section>

  <footer class="status">
    <span class="coords">33360.65, -23545.08, 0.00</span>
    <span class="st">SNAP</span><span class="st">GRID</span><span class="st">ORTHO</span><span class="st on">POLAR</span><span class="st on">OSNAP</span><span class="st on">OTRACK</span><span class="st on">DUCS</span><span class="st on">DYN</span><span class="st">LWT</span><span class="st on">MODEL</span>
    <div class="strayr">
      <div class="stray"><svg class="i i18"><use href="#s-sat"/></svg><svg class="i i18"><use href="#s-lock"/></svg><svg class="i i18"><use href="#s-tool"/></svg></div>
      <i class="sdrop"></i>
      <i class="sclean"></i>
    </div>
  </footer>

  <div class="taskbar">
    <svg class="orb"><use href="#t-orb"/></svg>
    <span class="tk tk-pin"><svg class="tk-i"><use href="#t-ie"/></svg></span>
    <span class="tk tk-on"><svg class="tk-i"><use href="#t-folder"/></svg></span>
    <span class="tk tk-wmp"><svg class="tk-i"><use href="#t-wmp"/></svg></span>
    <span class="tk tk-run"><svg class="tk-i"><use href="#t-tv"/></svg></span>
    <span class="tk tk-run"><svg class="tk-i"><use href="#t-word"/></svg></span>
    <span class="tk tk-run tk-act"><svg class="tk-i"><use href="#t-acad"/></svg></span>
    <div class="tray">
      <span class="lang">EN</span>
      <i class="tup"></i>
      <svg class="i"><use href="#y-flag"/></svg><svg class="i"><use href="#y-net"/></svg><svg class="i"><use href="#y-spk"/></svg>
      <div class="clock"><span>1:03 PM</span><span>8/2/2012</span></div>
      <i class="showdesk"></i>
    </div>
  </div>

  <div class="dialog">
    <div class="dlg-title">
      <svg class="i"><use href="#dlgicon"/></svg>
      <span class="dlg-name">Drillhole Data Sheet</span>
      <div class="dlg-btns"><span class="db"><i class="db-min"></i></span><span class="db"><i class="db-max"></i></span><span class="db db-x">X</span></div>
    </div>
    <div class="dlg-client">
      <nav class="dlg-menu"><span>File</span><span>Edit</span><span>Search</span><span>Display</span><span>Options</span></nav>
      <div class="dlg-body">
        <div class="panel p-top">
          <div class="view">
            <table class="sheet t-main">
              <thead><tr><th class="corner"></th><th>Name</th><th>Description</th><th>Northing</th><th>Easting</th><th>Elevation</th><th>Process</th><th>Density</th><th>Type</th><th>XY Quality</th><th>Z Quality</th><th>StartDate</th><th></th></tr></thead>
              <tbody>
<tr><td class="rh">74</td><td>D19</td><td></td><td class="n">-16667.00</td><td class="n">27173.00</td><td class="n">767.400</td><td class="c"><i class="cb1 on"><svg><use href="#chk"/></svg></i></td><td class="n">80.00</td><td><i class="ddb"></i>Unknown</td><td><i class="ddb"></i>Unknown</td><td><i class="ddb"></i>Unknown</td><td>290878</td><td>01</td></tr>
<tr><td class="rh">75</td><td>D20</td><td></td><td class="n">-18266.00</td><td class="n">28120.00</td><td class="n">775.940</td><td class="c"><i class="cb1 on"><svg><use href="#chk"/></svg></i></td><td class="n">80.00</td><td><i class="ddb"></i>Unknown</td><td><i class="ddb"></i>Unknown</td><td><i class="ddb"></i>Unknown</td><td>220878</td><td>30</td></tr>
<tr><td class="rh">76</td><td>D21</td><td></td><td class="n">-17198.00</td><td class="n">28528.00</td><td class="n">750.710</td><td class="c"><i class="cb1 on"><svg><use href="#chk"/></svg></i></td><td class="n">80.00</td><td><i class="ddb"></i>Unknown</td><td><i class="ddb"></i>Unknown</td><td><i class="ddb"></i>Unknown</td><td>250878</td><td>01</td></tr>
<tr><td class="rh">77</td><td>D22</td><td></td><td class="n">-18874.00</td><td class="n">28055.00</td><td class="n">802.060</td><td class="c"><i class="cb1 on"><svg><use href="#chk"/></svg></i></td><td class="n">80.00</td><td><i class="ddb"></i>Unknown</td><td><i class="ddb"></i>Unknown</td><td><i class="ddb"></i>Unknown</td><td>110978</td><td>25</td></tr>
<tr><td class="rh">78</td><td>D34</td><td></td><td class="n">-17060.00</td><td class="n">24087.00</td><td class="n">597.310</td><td class="c"><i class="cb1 on"><svg><use href="#chk"/></svg></i></td><td class="n">80.00</td><td><i class="ddb"></i>Unknown</td><td><i class="ddb"></i>Unknown</td><td><i class="ddb"></i>Unknown</td><td>030780</td><td>08</td></tr>
<tr><td class="rh">79</td><td>D35</td><td></td><td class="n">-16659.00</td><td class="n">24882.00</td><td class="n">645.540</td><td class="c"><i class="cb1 on"><svg><use href="#chk"/></svg></i></td><td class="n">80.00</td><td><i class="ddb"></i>Unknown</td><td><i class="ddb"></i>Unknown</td><td><i class="ddb"></i>Unknown</td><td>120580</td><td>27</td></tr>
<tr><td class="rh">80</td><td>D36</td><td></td><td class="n">-15569.00</td><td class="n">24227.00</td><td class="n">615.190</td><td class="c"><i class="cb1 on"><svg><use href="#chk"/></svg></i></td><td class="n">80.00</td><td><i class="ddb"></i>Unknown</td><td><i class="ddb"></i>Unknown</td><td><i class="ddb"></i>Unknown</td><td>170680</td><td>25</td></tr>
<tr><td class="rh">81</td><td>D5</td><td></td><td class="n">-19178.00</td><td class="n">24213.00</td><td class="n">636.380</td><td class="c"><i class="cb1 on"><svg><use href="#chk"/></svg></i></td><td class="n">80.00</td><td><i class="ddb"></i>Unknown</td><td><i class="ddb"></i>Unknown</td><td><i class="ddb"></i>Unknown</td><td>190676</td><td>21</td></tr>
<tr><td class="rh">82</td><td>D7</td><td></td><td class="n">-19730.00</td><td class="n">25198.00</td><td class="n">668.740</td><td class="c"><i class="cb1 on"><svg><use href="#chk"/></svg></i></td><td class="n">80.00</td><td><i class="ddb"></i>Unknown</td><td><i class="ddb"></i>Unknown</td><td><i class="ddb"></i>Unknown</td><td>100177</td><td>14</td></tr>
<tr><td class="rh">83</td><td>D9</td><td></td><td class="n">-18627.00</td><td class="n">26682.00</td><td class="n">713.060</td><td class="c"><i class="cb1 on"><svg><use href="#chk"/></svg></i></td><td class="n">80.00</td><td><i class="ddb"></i>Unknown</td><td><i class="ddb"></i>Unknown</td><td><i class="ddb"></i>Unknown</td><td>170577</td><td>24</td></tr>
<tr><td class="rh">84</td><td>DP1</td><td></td><td class="n">-17437.00</td><td class="n">27312.00</td><td class="n">694.430</td><td class="c"><i class="cb1 on"><svg><use href="#chk"/></svg></i></td><td class="n">80.00</td><td><i class="ddb"></i>Unknown</td><td><i class="ddb"></i>Unknown</td><td><i class="ddb"></i>Unknown</td><td>010678</td><td>06</td></tr>
<tr class="sel"><td class="rh">85</td><td>DP10</td><td></td><td class="n">-17508.00</td><td class="n">28069.00</td><td class="n">724.220</td><td class="c"><i class="cb1 on"><svg><use href="#chk"/></svg></i></td><td class="n">80.00</td><td><i class="ddb"></i>Unknown</td><td><i class="ddb"></i>Unknown</td><td><i class="ddb"></i>Unknown</td><td>100878</td><td>26</td></tr>
<tr><td class="rh"></td><td></td><td></td><td></td><td></td><td></td><td></td><td></td><td><i class="ddb"></i></td><td><i class="ddb"></i></td><td><i class="ddb"></i></td><td></td><td></td></tr>
              </tbody>
            </table>
          </div>
          <div class="vs">
            <span class="sb-btn b-top"><i class="tri up"></i></span><i class="track t-a"></i><i class="vthumb vt-a"></i><i class="track"></i><span class="sb-btn b-bot"><i class="tri dn"></i></span>
          </div>
          <div class="hs">
            <span class="sb-btn b-side"><i class="tri lf"></i></span><i class="hthumb"></i><i class="htrack"></i><span class="sb-btn b-side"><i class="tri rt"></i></span>
          </div>
          <i class="scorner"></i>
        </div>

        <div class="lower">
          <div class="panel p-layers">
            <div class="view grey">
              <table class="sheet t-lay">
                <thead><tr><th class="corner"></th><th class="hot">Name</th><th>Depth</th><th>Elevation</th><th>Thick.,ft</th><th>Key</th><th>Bed_Name</th></tr></thead>
                <tbody>
<tr><td class="rh">1</td><td>AL</td><td class="n">.000</td><td class="n">-985.780</td><td class="n">1710.000</td><td class="c"><i class="cb1"></i></td><td>YPER21</td></tr>
<tr><td class="rh hot">2</td><td class="cur">CO</td><td class="n">1710.000</td><td class="n">-1015.780</td><td class="n">30.000</td><td class="c"><i class="cb1 on"><svg><use href="#chk"/></svg></i></td><td>C21</td></tr>
<tr><td class="rh">3</td><td>CO</td><td class="n">1740.000</td><td class="n">-1105.780</td><td class="n">90.000</td><td class="c"><i class="cb1 on"><svg><use href="#chk"/></svg></i></td><td>C21</td></tr>
<tr><td class="rh">4</td><td>CO</td><td class="n">1830.000</td><td class="n">-1155.780</td><td class="n">50.000</td><td class="c"><i class="cb1 on"><svg><use href="#chk"/></svg></i></td><td>C21</td></tr>
<tr><td class="rh">5</td><td>AL</td><td class="n">1880.000</td><td class="n">-1205.780</td><td class="n">50.000</td><td class="c"><i class="cb1"></i></td><td>END2130</td></tr>
<tr><td class="rh">6</td><td>CO</td><td class="n">1930.000</td><td class="n">-1305.780</td><td class="n">100.000</td><td class="c"><i class="cb1 on"><svg><use href="#chk"/></svg></i></td><td>C30</td></tr>
<tr><td class="rh">7</td><td>CO</td><td class="n">2030.000</td><td class="n">-1330.780</td><td class="n">25.000</td><td class="c"><i class="cb1 on"><svg><use href="#chk"/></svg></i></td><td>C30</td></tr>
<tr><td class="rh">8</td><td>CO</td><td class="n">2055.000</td><td class="n">-1405.780</td><td class="n">75.000</td><td class="c"><i class="cb1 on"><svg><use href="#chk"/></svg></i></td><td>C30</td></tr>
<tr><td class="rh">9</td><td>CO</td><td class="n">2130.000</td><td class="n">-1505.780</td><td class="n">100.000</td><td class="c"><i class="cb1 on"><svg><use href="#chk"/></svg></i></td><td>C30</td></tr>
<tr><td class="rh">10</td><td>CO</td><td class="n">2230.000</td><td class="n">-1585.780</td><td class="n">80.000</td><td class="c"><i class="cb1 on"><svg><use href="#chk"/></svg></i></td><td>C30</td></tr>
<tr><td class="rh">11</td><td>CO</td><td class="n">2310.000</td><td class="n">-1595.780</td><td class="n">10.000</td><td class="c"><i class="cb1 on"><svg><use href="#chk"/></svg></i></td><td>C30</td></tr>
<tr><td class="rh">12</td><td>AL</td><td class="n">2320.000</td><td class="n">-1610.780</td><td class="n">15.000</td><td class="c"><i class="cb1 on"><svg><use href="#chk"/></svg></i></td><td>C30</td></tr>
                </tbody>
              </table>
            </div>
            <div class="vs">
              <span class="sb-btn b-top2"><i class="tri up"></i></span><i class="vthumb vt-b"></i><i class="track"></i><span class="sb-btn b-top2"><i class="tri dn"></i></span>
            </div>
          </div>
          <div class="panel p-qual">
            <div class="view grey">
              <table class="sheet t-qual">
                <thead><tr><th class="corner"></th><th>Name</th><th>Value</th></tr></thead>
                <tbody>
<tr class="sel"><td class="rh">1</td><td>MOIST</td><td>46.700</td></tr>
<tr><td class="rh">2</td><td>CO2</td><td>0.000</td></tr>
<tr><td class="rh">3</td><td>ASH</td><td>27.800</td></tr>
<tr><td class="rh">4</td><td>BTU</td><td>1835.000</td></tr>
                </tbody>
              </table>
            </div>
          </div>
        </div>
        <div class="dlg-status">READY</div>
      </div>
    </div>
  </div>
</div>
</body>
</html>
```
FILE: styles.css
```css
* { box-sizing: border-box; }
html, body { margin: 0; padding: 0; }
body { width: 1600px; height: 900px; overflow: hidden; background: #f0f0f0; font-family: "Noto Sans", "Liberation Sans", sans-serif; }
.sprite { width: 0; height: 0; position: absolute; }
i, b { font-style: normal; font-weight: normal; display: block; }
.i { width: 16px; height: 16px; display: block; flex: none; }
.i18 { width: 18px; height: 18px; }
.i14 { width: 17px; height: 16px; padding-right: 1px; }
.app { position: relative; width: 1600px; height: 900px; display: flex; flex-direction: column; overflow: hidden; }

/* title */
.titlebar { height: 21px; flex: none; display: flex; align-items: center; position: relative;
  background: radial-gradient(ellipse 90px 14px at 800px 11px, rgba(255,255,255,.22), rgba(255,255,255,0) 100%), linear-gradient(90deg, #3b87cb 0, #2a74bd 40%, #2268ae 75%, #1d568f 100%); border-bottom: 1px solid #163f6b; }
.app-ico { width: 15px; height: 16px; margin: 0 6px 0 0; }
.title-text { font-size: 12px; color: #000; line-height: 20px; padding-top: 1px; letter-spacing: -.26px; white-space: nowrap; text-shadow: 0 0 6px #cfe6fa, 0 0 6px #cfe6fa, 0 0 3px #e2f0fc; }
.wbtns { margin-left: auto; display: flex; height: 18px; align-self: flex-start; margin-right: 4px; border: 1px solid #9cc0e0; border-top: 0; border-radius: 0 0 4px 4px; background: rgba(255,255,255,.12); }
.wb { display: flex; align-items: center; justify-content: center; width: 28px; border-right: 1px solid rgba(200,225,245,.6); color: #fff; font: 700 13px "Liberation Sans", sans-serif; text-shadow: 0 0 2px #333; }
.wb:last-child { width: 45px; border-right: 0; }
.wb-min i { width: 10px; height: 4px; background: #fff; border: 1px solid #555; margin-top: 5px; }
.wb-max i { width: 9px; height: 10px; background: #dfe8f0; border: 1px solid #444; box-shadow: 2px -2px 0 0 #dfe8f0, 3px -3px 0 0 #444; }

/* menu */
.menubar { height: 21px; flex: none; display: flex; align-items: center; background: linear-gradient(#fff 0, #e6e9f5 35%, #d6dbee 100%); border-bottom: 1px solid #b8bfd4; font-size: 12px; letter-spacing: -.1px; color: #6b6b6b; padding-left: 8px; }
.menu-ico { width: 18px; height: 18px; margin-right: 5px; }
.menubar span { margin-right: 12px; }
.childbtns { margin-left: auto; display: flex; margin-right: 0; }
.menubar .cb { width: 18px; height: 17px; margin: 0 1px 0 0; border: 1px solid #a6b8cc; background: linear-gradient(#e6eef7, #c8d6e8); color: #667; font: 11px/14px "Liberation Sans", sans-serif; text-align: center; }

/* toolbars */
.tbrow { height: 28px; flex: none; display: flex; align-items: stretch; background: #efefef; padding-top: 2px; }
.tb { display: flex; align-items: center; height: 26px; padding-top: 2px; background: #f0f0f0; border-bottom: 2px solid #a4a4a4; border-right: 1px solid #c4c4c4; flex: none; }
.tb > b { width: 23px; height: 22px; display: flex; align-items: center; justify-content: center; }
.handle { width: 7px; height: 22px; margin: 0 3px 0 2px; border-left: 1px solid #9a9a9a; border-right: 1px solid #9a9a9a; background: #fff; flex: none; }
.sep { width: 1px; height: 20px; background: #a9a9a9; margin: 0 2.5px; flex: none; }
.sep-w { margin: 0 3.5px; }
.sep-a { margin: 0 3px; }
.sep-b { margin: 0 4px 0 1px; }
.drop { width: 12px; height: 22px; position: relative; flex: none; }
.drop::after { content: ""; position: absolute; left: 2px; top: 9px; border: 3px solid transparent; border-top: 4px solid #b5b5b5; border-bottom: 0; }
.tb1 { width: 658px; }
.tb2 { width: 392px; }
.tb2 .handle { margin: 0 0 0 3px; }
.tb2 > b { width: 21px; }
.tb2 .combo { margin-left: 2px; }
.combo { display: flex; align-items: center; height: 20px; border: 1px solid #b4b4b4; border-radius: 2px; background: #fff; font: 12px "Liberation Sans", sans-serif; color: #6c6c6c; padding-left: 4px; position: relative; flex: none; }
.c-mono { width: 100px; }
.arrow { margin-left: auto; width: 18px; height: 18px; background: #f4f4f4; position: relative; flex: none; }
.arrow::after { content: ""; position: absolute; left: 5px; top: 7px; border: 4px solid transparent; border-top: 5px solid #9a9a9a; border-bottom: 0; }
.tb-empty { width: 386px; }
.tb3 { width: 93px; margin-left: 2px; }
.tb3 .handle { margin: 0 0 0 3px; }
.tb3 > b { width: 22px; }
.tb3 .sep { margin: 0 3px; }
.tb4 { width: 593px; margin-left: 3px; }
.tb4 .handle { margin: 0 3px 0 3px; }
.tb4 .combo { letter-spacing: -.2px; }
.tb4 .handle-s { margin: 0 1px; width: 5px; }
.c-color { width: 151px; }
.c-line { width: 158px; margin-left: 7px; }
.c-line2 { width: 125px; }
.c-plot { width: 118px; padding-left: 10px; }
.swatch { width: 10px; height: 10px; border: 1px solid #111; background: #fff; margin-right: 4px; flex: none; }
.sw-lg { width: 11px; height: 13px; margin: 0 5px 0 -2px; }
.ln { width: 36px; height: 1px; background: #111; margin-right: 6px; flex: none; }
.c-line .ln { width: 60px; }
.tb5 { width: 386px; margin-left: 0; }
.tb5 > b { width: 22px; }
.c-layer { width: 300px; }
.tb6 { width: 86px; }
.tb6 > b { width: 23px; }

/* workspace */
.workspace { height: 682px; flex: none; display: flex; background: #f2f2f2; border-bottom: 2px solid #a8a8a8; }
.vbar { flex: none; background: #f2f2f2; }
.vbar-l { width: 28px; padding-top: 0; }
.vbar-r { width: 28px; padding: 1px 0 0 3px; }
.vtb { background: #f0f0f0; border-right: 1px solid #c8c8c8; border-bottom: 2px solid #b0b0b0; display: flex; flex-direction: column; align-items: center; padding-bottom: 5px; }
.vbar-l .vtb { width: 25px; padding-bottom: 5px; }
.vbar-r .vtb { width: 25px; margin-bottom: 1px; }
.vtb > b { width: 22px; height: 22px; display: flex; align-items: center; justify-content: center; }
.vhandle { width: 20px; height: 6px; margin: 2px 0 2px; border-top: 1px solid #9a9a9a; border-bottom: 1px solid #9a9a9a; background: #fff; }
.vtb > .big-a { font: 20px/22px "Liberation Sans", sans-serif; color: #111; }
.canvas-col { flex: 1; display: flex; flex-direction: column; min-width: 0; }
.canvas { flex: 1; background: #000; position: relative; }
.ucs { position: absolute; left: 0; top: 523px; }
.tabs { height: 14px; flex: none; display: flex; align-items: stretch; background: #f0f0f0; margin-bottom: 5px; }
.nav { width: 18px; display: flex; align-items: center; justify-content: center; border-right: 1px solid #bbb; }
.nav i { width: 0; height: 0; border-style: solid; border-color: transparent; }
.nav .nf, .nav .np { border-width: 4px 6px 4px 0; border-right-color: #111; }
.nav .nn, .nav .nl { border-width: 4px 0 4px 6px; border-left-color: #111; }
.nav .nf { box-shadow: -2px 0 0 #111; }
.nav .nl { box-shadow: 2px 0 0 #111; }
.tab { width: 49px; padding: 0 2px; font: 11px/14px "Liberation Sans", sans-serif; letter-spacing: -.3px; color: #111; background: #e8e8e8; clip-path: polygon(0 0, 100% 0, 92% 100%, 10% 100%); text-align: center; white-space: nowrap; }
.tab-on { width: 42px; margin: 0 3px; background: #000; color: #fff; }

/* command */
.command { height: 58px; flex: none; display: flex; background: #f0f0f0; padding-top: 9px; }
.chandle { width: 7px; height: 47px; margin: 2px 3px 0 8px; border-left: 1px solid #999; border-right: 1px solid #999; background: #fff; flex: none; }
.cbox { flex: 1; background: #fff; border-top: 2px solid #909090; font: 13px/24px "Liberation Mono", monospace; color: #111; }
.cline { height: 24px; padding-left: 1px; border-bottom: 1px solid #aaa; line-height: 22px; }
.cinput { height: 21px; }
.cscroll { width: 25px; background: #fff; border-top: 2px solid #909090; flex: none; position: relative; }
.ca { position: absolute; width: 0; height: 0; border: 4px solid transparent; }
.ca-up { top: 5px; left: 5px; border-bottom: 4px solid #666; border-top: 0; }
.ca-dn { top: 17px; left: 5px; border-top: 4px solid #666; border-bottom: 0; }
.chs { position: absolute; right: 25px; bottom: 0; width: 67px; height: 17px; background: #efefef; display: flex; align-items: center; }
.al { width: 0; height: 0; margin-left: 6px; border: 4px solid transparent; border-right: 5px solid #666; border-left: 0; }
.ar { width: 0; height: 0; margin: 0 7px 0 auto; border: 4px solid transparent; border-left: 5px solid #666; border-right: 0; }
.thumb { width: 15px; height: 15px; margin-left: 8px; background: linear-gradient(#f2f2f2, #d4d4d4); border: 1px solid #bbb; }

/* status */
.status { height: 22px; flex: none; display: flex; align-items: center; background: #f0eded; border-top: 2px solid #a8a8a8; padding: 0 0 0 5px; gap: 4px; font: 12px "Liberation Sans", sans-serif; letter-spacing: -.5px; color: #111; }
.coords { width: 161px; height: 17px; border: 1px solid #c0c0c0; line-height: 15px; padding-left: 2px; letter-spacing: -.6px; margin-right: 2px; background: #efeded; }
.st { height: 17px; line-height: 16px; text-align: center; padding: 0; min-width: 27px; border: 1px solid #dcd8d8; background: #efecec; }
.st.on { border-top: 1px solid #111; border-left: 1px solid #111; border-right: 1px solid #fff; border-bottom: 1px solid #fff; background: #f4f2f2; }
.strayr { margin-left: auto; display: flex; align-items: center; }
.stray { width: 66px; height: 18px; display: flex; gap: 2px; padding-left: 2px; align-items: center; border: 1px solid #d0d0d0; background: #f4f4f4; }
.sdrop { width: 0; height: 0; margin: 2px 7px 0 6px; border: 4px solid transparent; border-top: 5px solid #111; border-bottom: 0; }
.sclean { width: 16px; height: 16px; border: 1px solid #26507e; background: linear-gradient(135deg, #cfe0f0, #6d9bc9); box-shadow: inset 0 0 0 1px #fff; margin-right: 4px; }

/* taskbar */
.taskbar { height: 40px; flex: none; display: flex; align-items: stretch; position: relative; background: linear-gradient(#5ba6d8 0, #3a8dc6 8%, rgba(58,141,198,0) 50%), linear-gradient(90deg, #2f86c2 0, #3a92cb 20%, #2a7ab8 45%, #1a60a0 70%, #124679 100%); border-top: 1px solid #0d2c4d; }
.orb { width: 36px; height: 36px; margin: 2px 14px 0 9px; flex: none; }
.tk { display: flex; align-items: center; justify-content: center; flex: none; border-radius: 3px; }
.tk-i { width: 32px; height: 32px; flex: none; }
.tk-pin { width: 60px; margin-right: 3px; }
.tk-on { width: 54px; margin-right: 6px; background: linear-gradient(#66e066, #30c840); border: 1px solid #0f5a2a; box-shadow: inset 0 0 0 1px rgba(255,255,255,.5); }
.tk-wmp { width: 56px; margin-right: 8px; border-left: 1px solid rgba(255,255,255,.35); border-radius: 0; }
.tk-run { width: 58px; margin-right: 4px; background: linear-gradient(rgba(255,255,255,.28), rgba(255,255,255,.12)); border: 1px solid rgba(10,40,70,.6); box-shadow: inset 0 0 0 1px rgba(255,255,255,.25); }
.tk-act { background: linear-gradient(rgba(255,255,255,.5), rgba(255,255,255,.3)); }
.tray { margin-left: auto; display: flex; align-items: center; color: #fff; font-size: 12px; }
.tray .i { margin-right: 8px; }
.lang { margin-right: 18px; padding-bottom: 3px; }
.tup { width: 0; height: 0; margin: 0 14px 0 0; border: 4px solid transparent; border-bottom: 4px solid #fff; border-top: 0; }
.clock { display: flex; flex-direction: column; align-items: center; width: 64px; margin-left: 4px; line-height: 16px; }
.showdesk { width: 12px; height: 39px; margin-left: 5px; margin-right: 1px; border: 1px solid rgba(220,235,250,.4); background: rgba(255,255,255,.12); }

/* dialog window */
.dialog { position: absolute; left: 201px; top: 201px; width: 1199px; height: 625px; border-radius: 6px; border: 1px solid #b0b4b8; padding: 0 6px 6px; display: flex; flex-direction: column; background: linear-gradient(#0a0d12 0, #0a0d12 90%, #1b2a3a 92%, #b7d6f3 95%, #bcdaf5 100%); box-shadow: 0 0 22px 6px rgba(0,0,0,.75); }
.dlg-title { height: 27px; padding-bottom: 1px; flex: none; display: flex; align-items: center; color: #fff; position: relative; background: linear-gradient(90deg, rgba(0,0,0,0) 0, rgba(0,0,0,0) 90%, #5a5e62 100%); margin: 0 -6px; padding-left: 6px; border-radius: 6px 6px 0 0; }
.dlg-name { font-size: 12px; letter-spacing: -.25px; margin-left: 5px; color: #0c0c0c; background: rgba(200,200,200,.75); box-shadow: 0 0 10px 6px rgba(200,200,200,.7); line-height: 12px; }
.dlg-btns { margin-left: auto; display: flex; height: 19px; margin-right: 6px; align-self: flex-start; border: 1px solid #8b9094; border-top: 0; border-radius: 0 0 4px 4px; overflow: hidden; }
.db { display: flex; align-items: center; justify-content: center; width: 28px; background: linear-gradient(#888c90, #4d5054 50%, #2e3034); border-right: 1px solid #aaa; }
.db-x { width: 46px; border: 0; background: linear-gradient(#d06a5a, #b0362a 50%, #9b2a20); color: #fff; font: 700 14px "Liberation Sans", sans-serif; }
.db-min { width: 10px; height: 3px; background: #fff; margin-top: 5px; }
.db-max { width: 10px; height: 9px; border: 2px solid #fff; }
.dlg-client { flex: 1; background: #fff; display: flex; flex-direction: column; min-height: 0; border: 1px solid #7a7a7a; }
.dlg-menu { height: 20px; flex: none; display: flex; align-items: center; padding-left: 5px; font-size: 12px; letter-spacing: -.1px; color: #111; background: linear-gradient(#fff 0, #e8ebf6 30%, #d8ddef 100%); border-bottom: 1px solid #bcc4d8; }
.dlg-menu span { margin-right: 12.5px; }
.dlg-body { flex: 1; min-height: 0; padding: 12px 11px 2px 11px; display: flex; flex-direction: column; }
.panel { border: 1px solid #6a6a6a; background: #c0c0c0; display: grid; min-height: 0; }
.p-top { height: 266px; flex: none; grid-template-columns: 1142px 1fr; grid-template-rows: 248px 1fr; background: #fff; }
.view { overflow: hidden; min-width: 0; min-height: 0; background: #fff; }
.view.grey { background: #bebebe; }
.lower { display: flex; height: 243px; flex: none; margin-top: 12px; }
.p-layers { width: 689px; grid-template-columns: 1fr 16px; }
.p-qual { width: 461px; margin-left: 11px; grid-template-columns: 1fr; }
.dlg-status { height: 22px; flex: none; margin: 12px -11px 0; border: 1px solid #666; background: #efefef; font: 700 13px/19px "Liberation Sans", sans-serif; color: #111; text-align: center; }

/* grids */
.sheet { border-collapse: separate; border-spacing: 0; table-layout: fixed; font: 13px/18px "Liberation Mono", monospace; color: #151515; }
.sheet th, .sheet td { height: 19px; padding: 0 2px; overflow: hidden; white-space: nowrap; border-right: 1px solid #c0c0c0; border-bottom: 1px solid #c0c0c0; font-weight: normal; background: #fff; }
.sheet th { background: linear-gradient(#f6f8fc, #dde4f0); text-align: center; border-right: 1px solid #a6bfdc; border-bottom: 1px solid #a6bfdc; padding-top: 1px; line-height: 17px; }
.sheet th.corner { background: #a9c4e8; position: relative; }
.sheet th.corner::after { content: ""; position: absolute; right: 2px; bottom: 2px; border-style: solid; border-width: 0 0 9px 9px; border-color: transparent transparent #e8eff8 transparent; }
.sheet th.hot { background: linear-gradient(#fbe0a8, #f6c066); border-bottom: 1px solid #ed9a2c; border-right: 1px solid #ed9a2c; }
.sheet td.rh { background: #e3ebf6; text-align: center; border-right: 1px solid #a6bfdc; }
.sheet td.rh.hot { background: #fbc97a; }
.sheet td.n { text-align: right; }
.sheet td.c { text-align: center; padding: 0; }
.sheet td.cur { box-shadow: inset 0 0 0 2px #111; }
.sheet tr.sel td { background: #3399ff; color: #fff; border-right-color: #3399ff; border-bottom-color: #fff; }
.sheet tr.sel td.rh { background: #e3ebf6; color: #151515; border-right-color: #a6bfdc; border-bottom-color: #c0c0c0; }
.t-main { width: 1143px; }
.t-main th:nth-child(1) { width: 33px; } .t-main th:nth-child(2) { width: 95px; } .t-main th:nth-child(3) { width: 120px; } .t-main th:nth-child(4) { width: 96px; } .t-main th:nth-child(5) { width: 96px; } .t-main th:nth-child(6) { width: 96px; } .t-main th:nth-child(7) { width: 62px; } .t-main th:nth-child(8) { width: 98px; } .t-main th:nth-child(9) { width: 112px; } .t-main th:nth-child(10) { width: 112px; } .t-main th:nth-child(11) { width: 112px; } .t-main th:nth-child(12) { width: 96px; } .t-main th:nth-child(13) { width: 15px; }
.t-main td:nth-child(13) { border-right: 0; }
.t-main td:nth-child(n+9):nth-child(-n+11) { padding-right: 0; }
.t-lay { width: 519px; }
.t-lay th:nth-child(1) { width: 32px; } .t-lay th:nth-child(2) { width: 120px; } .t-lay th:nth-child(3) { width: 81px; } .t-lay th:nth-child(4) { width: 87px; } .t-lay th:nth-child(5) { width: 80px; } .t-lay th:nth-child(6) { width: 32px; } .t-lay th:nth-child(7) { width: 87px; }
.t-qual { width: 337px; }
.t-qual th:nth-child(1) { width: 33px; } .t-qual th:nth-child(2) { width: 120px; } .t-qual th:nth-child(3) { width: 184px; }
.ddb { float: right; width: 16px; height: 18px; background: linear-gradient(#f4f4f4, #dcdcdc); border: 1px solid #8a8a8a; position: relative; }
.ddb::after { content: ""; position: absolute; left: 3px; top: 6px; border: 4px solid transparent; border-top: 4px solid #111; border-bottom: 0; }
.cb1 { display: block; margin: 0 auto 2px; width: 14px; height: 14px; border: 1px solid #8f8f8f; background: linear-gradient(135deg, #e6e6e6, #fff); }
.cb1 svg { width: 12px; height: 12px; display: block; }

/* scrollbars */
.vs { display: flex; flex-direction: column; grid-column: 2; grid-row: 1; background: #7496bf; border-left: 1px solid #5b7ca6; min-height: 0; }
.track { flex: 1; background: #7496bf; }
.vs .t-a { flex: 0 0 69px; }
.sb-btn { flex: none; display: flex; align-items: center; justify-content: center; background: linear-gradient(#e6eef8, #c5d6ec); border: 1px solid #5a7ca8; }
.b-top { height: 18px; }
.b-bot { height: 15px; }
.b-top2 { height: 16px; }
.b-side { width: 14px; }
.vthumb { background: linear-gradient(90deg, #bed3ef, #d6e5f7 50%, #bed3ef); border: 1px solid #5a7ca8; border-width: 1px 0; flex: none; }
.vt-a { height: 10px; }
.vt-b { height: 71px; }
.tri { width: 0; height: 0; border: 5px solid transparent; }
.tri.up { border-bottom: 5px solid #344a6e; border-top: 0; }
.tri.dn { border-top: 5px solid #344a6e; border-bottom: 0; }
.tri.lf { border-right: 5px solid #344a6e; border-left: 0; }
.tri.rt { border-left: 5px solid #344a6e; border-right: 0; }
.hs { grid-column: 1; grid-row: 2; display: flex; align-items: stretch; background: #7496bf; border-top: 1px solid #8aa5c8; padding-left: 1px; }
.hthumb { width: 1017px; background: linear-gradient(#d6e4f6, #d6e4f6 45%, #bed2ee 50%, #bed2ee); border-right: 1px solid #5a7ca8; flex: none; }
.htrack { flex: 1; }
.scorner { grid-column: 2; grid-row: 2; background: linear-gradient(#8fb0d8, #a8c6ea); }
```
